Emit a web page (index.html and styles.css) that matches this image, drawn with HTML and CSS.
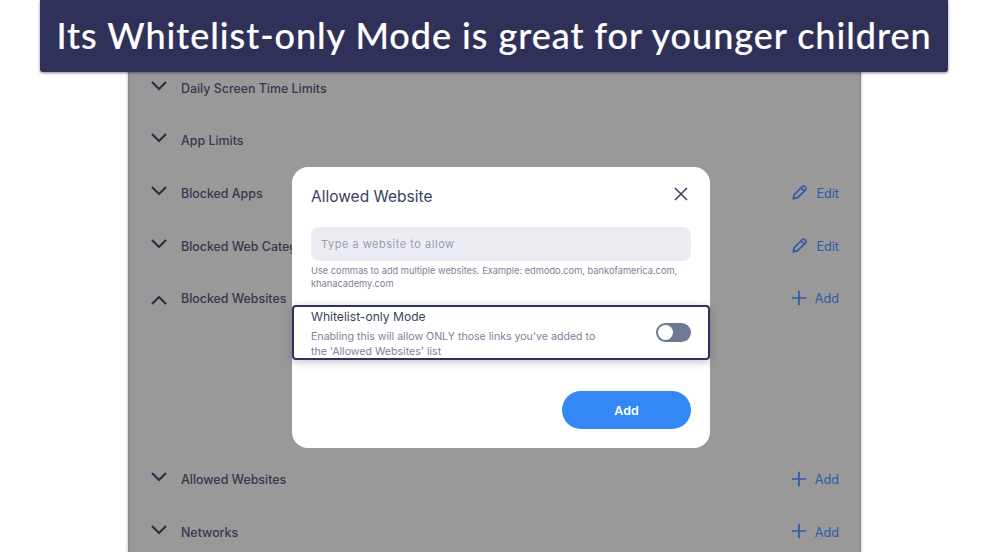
FILE: index.html
```html
<!DOCTYPE html>
<html lang="en">
<head>
<meta charset="utf-8">
<title>Whitelist-only Mode</title>
<link rel="stylesheet" href="styles.css">
</head>
<body>
<main class="panel">
  <div class="row">
    <svg class="chev" viewBox="0 0 18 11"><path d="M2 2l7 7 7-7"/></svg>
    <span class="label">Daily Screen Time Limits</span>
  </div>
  <div class="row">
    <svg class="chev" viewBox="0 0 18 11"><path d="M2 2l7 7 7-7"/></svg>
    <span class="label">App Limits</span>
  </div>
  <div class="row">
    <svg class="chev" viewBox="0 0 18 11"><path d="M2 2l7 7 7-7"/></svg>
    <span class="label">Blocked Apps</span>
    <span class="action"><svg class="ico" viewBox="0 0 16 16"><path d="M1.4 14.6l.7-3.8 8.2-8.3a1.6 1.6 0 0 1 2.3 0l1 1a1.6 1.6 0 0 1 0 2.3l-8.3 8.1zM9 3.8l3.2 3.2"/></svg>Edit</span>
  </div>
  <div class="row">
    <svg class="chev" viewBox="0 0 18 11"><path d="M2 2l7 7 7-7"/></svg>
    <span class="label">Blocked Web Categories</span>
    <span class="action"><svg class="ico" viewBox="0 0 16 16"><path d="M1.4 14.6l.7-3.8 8.2-8.3a1.6 1.6 0 0 1 2.3 0l1 1a1.6 1.6 0 0 1 0 2.3l-8.3 8.1zM9 3.8l3.2 3.2"/></svg>Edit</span>
  </div>
  <div class="row row-open">
    <svg class="chev chev-up" viewBox="0 0 18 11"><path d="M2 9l7-7 7 7"/></svg>
    <span class="label">Blocked Websites</span>
    <span class="action"><svg class="ico" viewBox="0 0 16 16"><path d="M8 .8v14.4M.8 8h14.4"/></svg>Add</span>
  </div>
  <div class="row">
    <svg class="chev" viewBox="0 0 18 11"><path d="M2 2l7 7 7-7"/></svg>
    <span class="label">Allowed Websites</span>
    <span class="action"><svg class="ico" viewBox="0 0 16 16"><path d="M8 .8v14.4M.8 8h14.4"/></svg>Add</span>
  </div>
  <div class="row">
    <svg class="chev" viewBox="0 0 18 11"><path d="M2 2l7 7 7-7"/></svg>
    <span class="label">Networks</span>
    <span class="action"><svg class="ico" viewBox="0 0 16 16"><path d="M8 .8v14.4M.8 8h14.4"/></svg>Add</span>
  </div>
</main>

<section class="modal">
  <header class="modal-head">
    <h2 class="modal-title">Allowed Website</h2>
    <svg class="close" viewBox="0 0 14 14"><path d="M1 1l12 12M13 1L1 13"/></svg>
  </header>
  <div class="input">Type a website to allow</div>
  <p class="hint">Use commas to add multiple websites. Example: edmodo.com, bankofamerica.com, khanacademy.com</p>
  <div class="mode">
    <div class="mode-text">
      <div class="mode-title">Whitelist-only Mode</div>
      <div class="mode-desc">Enabling this will allow ONLY those links you've added to the 'Allowed Websites' list</div>
    </div>
    <span class="toggle"><span class="knob"></span></span>
  </div>
  <div class="foot"><button class="add">Add</button></div>
</section>

<h1 class="banner">Its Whitelist-only Mode is great for younger children</h1>
</body>
</html>
```

FILE: styles.css
```css
html, body {
  margin: 0;
  height: 100%;
  background: #fff;
  overflow: hidden;
  font-family: "Inter", "Liberation Sans", sans-serif;
}

.panel {
  box-sizing: border-box;
  width: 733px;
  height: 552px;
  margin-left: 128px;
  padding: 62px 20px 0 20px;
  background: #999;
  border-left: 2px solid #8d8d92;
  border-right: 2px solid #8d8d92;
  box-shadow: -1px 0 2px #d5d5dc, 1px 0 2px #d5d5dc;
  overflow: hidden;
}

.row {
  display: flex;
  align-items: center;
  height: 52.6px;
}

.row-open {
  margin-bottom: 128.4px;
}

.chev {
  width: 18px;
  height: 11px;
  margin-right: 13px;
  position: relative;
  top: -3px;
  fill: none;
  stroke: #2f2d48;
  stroke-width: 2.2;
}

.chev-up {
  top: 2px;
}

.label {
  font-size: 12.4px;
  font-weight: 500;
  color: #38364f;
  white-space: nowrap;
}

.action {
  margin-left: auto;
  display: flex;
  align-items: center;
  gap: 8px;
  font-size: 12.7px;
  font-weight: 400;
  color: #2c5ca3;
}

.ico {
  width: 16px;
  height: 16px;
  position: relative;
  top: -1px;
  fill: none;
  stroke: #2c5ca3;
  stroke-width: 1.7;
}

.modal {
  position: absolute;
  left: 292px;
  top: 167px;
  box-sizing: border-box;
  width: 418px;
  height: 281px;
  padding: 0 19px;
  background: #fff;
  border-radius: 16px;
}

.modal-head {
  display: flex;
  justify-content: space-between;
  align-items: center;
  height: 60px;
}

.modal-title {
  margin: -2px 0 0;
  font-size: 15.5px;
  font-weight: 400;
  color: #3a3f5c;
}

.close {
  width: 14px;
  height: 14px;
  margin: 0 3px 6px 0;
  fill: none;
  stroke: #3a3f5c;
  stroke-width: 1.5;
}

.input {
  box-sizing: border-box;
  height: 34px;
  padding-left: 10px;
  line-height: 35px;
  border-radius: 8px;
  background: #ecedf2;
  font-size: 11px;
  letter-spacing: 0.52px;
  color: #9a9dae;
}

.hint {
  height: 25px;
  margin: 3px 0 0;
  padding-top: 1px;
  box-sizing: border-box;
  width: 378px;
  font-size: 9.28px;
  line-height: 12.5px;
  color: #7d8197;
}

.mode {
  display: flex;
  align-items: flex-start;
  justify-content: space-between;
  box-sizing: border-box;
  height: 55px;
  margin: 16px -19px 0;
  padding: 2px 17px 0 17px;
  border: 2px solid #2f3158;
  border-radius: 4px;
  box-shadow: 0 2px 8px rgba(47, 49, 88, 0.3);
}

.mode-text {
  width: 295px;
}

.mode-title {
  font-size: 12.1px;
  line-height: 16px;
  color: #3a3f5c;
}

.mode-desc {
  margin-top: 4px;
  font-size: 10.6px;
  line-height: 15px;
  color: #7d8197;
}

.toggle {
  display: flex;
  align-items: center;
  box-sizing: border-box;
  width: 35px;
  height: 19px;
  margin-top: 14px;
  padding: 0 2px;
  border-radius: 10px;
  background: #6e7a93;
}

.knob {
  width: 15px;
  height: 15px;
  border-radius: 50%;
  background: #fff;
}

.foot {
  display: flex;
  justify-content: flex-end;
  margin-top: 31px;
}

.add {
  width: 129px;
  height: 38px;
  padding: 0;
  border: 0;
  border-radius: 19px;
  background: #3388f5;
  color: #fff;
  font: 600 12.4px "Inter", "Liberation Sans", sans-serif;
}

.banner {
  position: absolute;
  left: 40px;
  top: 0;
  box-sizing: border-box;
  width: 908px;
  height: 72px;
  margin: 0;
  text-align: center;
  line-height: 71px;
  background: #2f3158;
  border-radius: 0 0 3px 3px;
  box-shadow: 0 1px 3px rgba(47, 49, 88, 0.6);
  color: #fff;
  font-family: "Lato", "Liberation Sans", sans-serif;
  font-size: 36px;
  font-weight: 500;
  letter-spacing: 0.96px;
  white-space: nowrap;
  -webkit-text-stroke: 0.15px #fff;
}
```
